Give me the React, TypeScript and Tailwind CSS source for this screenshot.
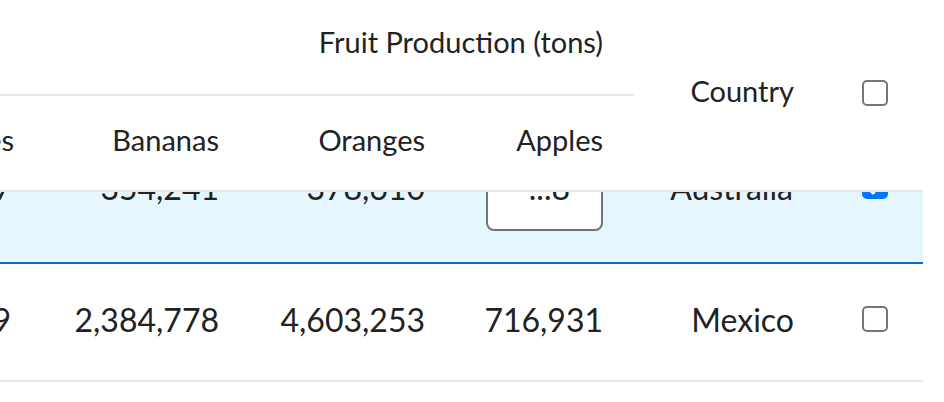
import React from "react";

const line = "border-[#e3e8ef]";

function Box({ checked = false }: { checked?: boolean }) {
  return (
    <div
      className={`flex h-[26px] w-[26px] items-center justify-center rounded-[5px] border-2 ${
        checked ? "border-[#0075ff] bg-[#0075ff]" : "border-[#767676] bg-white"
      }`}
    >
      {checked && (
        <svg viewBox="0 0 16 16" className="h-[22px] w-[22px]" fill="none" stroke="white" strokeWidth="2.6" strokeLinecap="round" strokeLinejoin="round">
          <path d="M3 9l3.5 3.8 6.5-8" />
        </svg>
      )}
    </div>
  );
}

const cols = "grid grid-cols-[200px_207px_206px_179px_190px_99px]";

export default function App() {
  return (
    <div
      className="h-[402px] w-[944px] overflow-hidden bg-white text-[#222]"
      style={{ fontFamily: "Lato, 'Noto Sans', sans-serif" }}
    >
      <div className="flex justify-end overflow-hidden pr-[21px]">
        <div className="w-[1081px] shrink-0 whitespace-nowrap">
          {/* Header */}
          <div className={`${cols} grid-rows-[96px_96px] text-[29px] leading-[36px]`}>
            <div className={`col-span-4 flex items-center justify-end border-b-2 ${line} pr-[31px] pb-[10px]`}>
              Fruit Production (tons)
            </div>
            <div className={`row-span-2 flex items-center justify-end border-b-2 ${line} pr-[30px] pb-[8px]`}>
              Country
            </div>
            <div className={`row-span-2 flex items-center border-b-2 ${line} pl-[38px] pb-[5px]`}>
              <Box />
            </div>
            <div className={`flex items-center justify-end border-b-2 ${line} pr-[28px] pb-[6px]`}>Grapes</div>
            <div className={`flex items-center justify-end border-b-2 ${line} pr-[30px] pb-[6px]`}>Bananas</div>
            <div className={`flex items-center justify-end border-b-2 ${line} pr-[30px] pb-[6px]`}>Oranges</div>
            <div className={`flex items-center justify-end border-b-2 ${line} pr-[31px] pb-[6px]`}>Apples</div>
          </div>

          {/* Selected row, partly under the sticky header */}
          <div className="flex h-[72px] flex-col justify-end overflow-hidden border-b-2 border-[#0b6bcb] bg-[#e6f6fe] text-[32px] leading-[40px]">
            <div className={`${cols} h-[142px] shrink-0`}>
              <div className="flex items-center justify-end pr-[30px] pb-[7px]">1,042,417</div>
              <div className="flex items-center justify-end pr-[30px] pb-[7px]">354,241</div>
              <div className="flex items-center justify-end pr-[30px] pb-[7px]">378,610</div>
              <div className="flex items-center justify-end pr-[31px] pb-[7px]">
                <div className="flex h-[87px] w-[117px] items-center justify-end rounded-[8px] border-2 border-[#6f747a] bg-white pr-[31px]">
                  ...8
                </div>
              </div>
              <div className="flex items-center justify-end pr-[31px] pb-[7px]">Australia</div>
              <div className="flex items-center pl-[38px] pb-[11px]">
                <Box checked />
              </div>
            </div>
          </div>

          {/* Mexico */}
          <div className={`${cols} h-[118px] border-b-2 ${line} text-[32px] leading-[40px]`}>
            <div className="flex items-center justify-end pr-[31px] pb-[5px]">1,859,329</div>
            <div className="flex items-center justify-end pr-[30px] pb-[5px]">2,384,778</div>
            <div className="flex items-center justify-end pr-[30px] pb-[5px]">4,603,253</div>
            <div className="flex items-center justify-end pr-[31px] pb-[5px]">716,931</div>
            <div className="flex items-center justify-end pr-[30px] pb-[5px]">Mexico</div>
            <div className="flex items-center pl-[38px] pb-[6px]">
              <Box />
            </div>
          </div>
        </div>
      </div>
    </div>
  );
}
